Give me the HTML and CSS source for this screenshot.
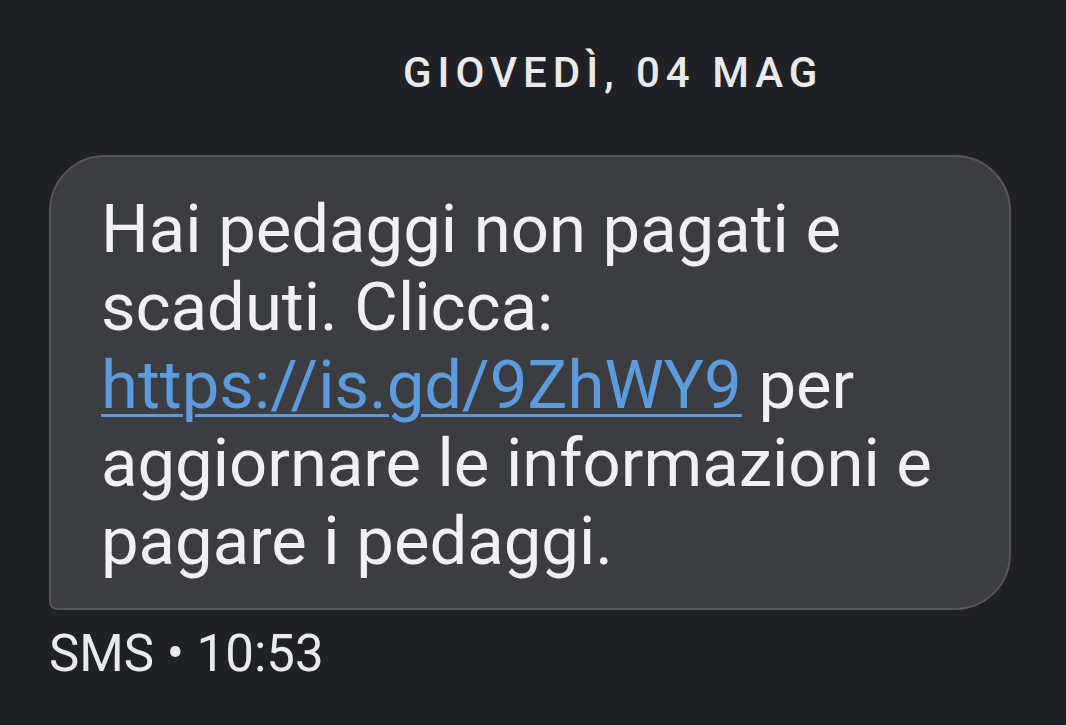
FILE: index.html
```html
<!DOCTYPE html>
<html lang="it">
<head>
<meta charset="utf-8">
<title>SMS</title>
<link rel="stylesheet" href="styles.css">
</head>
<body>
<main class="thread">
  <div class="date">GIOVEDÌ, 04 MAG</div>
  <div class="bubble">Hai pedaggi non pagati e scaduti. Clicca: <a class="link" href="#">https://is.gd/9ZhWY9</a> per aggiornare le informazioni e pagare i pedaggi.</div>
  <div class="meta">SMS • 10:53</div>
</main>
</body>
</html>
```
FILE: styles.css
```css
html, body {
  margin: 0;
  padding: 0;
  background: #202124;
  height: 100%;
  overflow: hidden;
}
.thread {
  display: flex;
  flex-direction: column;
  align-items: flex-start;
  padding: 0 0 0 49px;
  font-family: Roboto, "Liberation Sans", sans-serif;
}
.date {
  margin-top: 48px;
  margin-left: 354px;
  font-size: 42px;
  line-height: 50px;
  font-weight: 500;
  letter-spacing: 6px;
  color: #e8eaed;
}
.bubble {
  box-sizing: border-box;
  margin-top: 57px;
  width: 962px;
  padding: 33px 40px 28px 50px;
  background: #3c3d41;
  border: 2px solid #56575c;
  border-radius: 56px 56px 56px 8px;
  color: #f1f1f3;
  font-size: 67px;
  line-height: 78px;
}
.link {
  color: #5c9cdc;
  text-decoration: underline;
  text-decoration-thickness: 3px;
  text-underline-offset: 6px;
}
.meta {
  margin-top: 14px;
  font-size: 51px;
  line-height: 60px;
  color: #e8eaed;
}
```
